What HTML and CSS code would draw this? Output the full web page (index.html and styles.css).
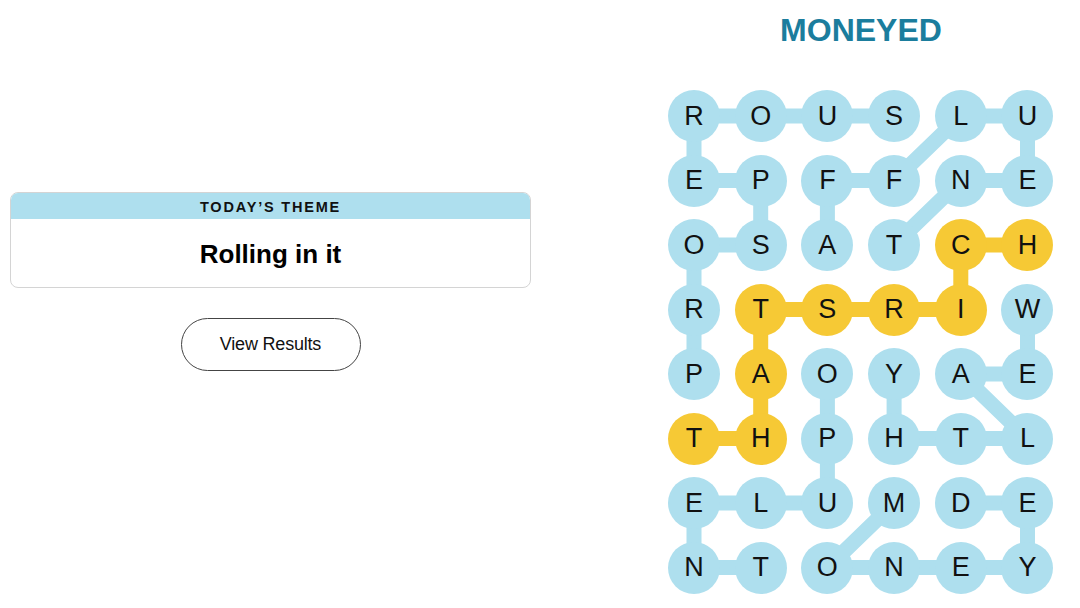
FILE: index.html
```html
<!DOCTYPE html>
<html lang="en">
<head>
  <meta charset="UTF-8">
  <meta name="viewport" content="width=device-width, initial-scale=1.0">
  <title>Strands - Results</title>
  <link rel="stylesheet" href="styles.css">
</head>
<body>

<div class="page">
  <!-- Theme card and results button -->
  <section class="theme-col">
    <div class="theme-card">
      <div class="theme-head">TODAY’S THEME</div>
      <div class="theme-body">Rolling in it</div>
    </div>
    <button class="results-btn">View Results</button>
  </section>

  <!-- Board with the found words -->
  <section class="board-col">
    <h2 class="found-word">MONEYED</h2>
    <div class="board">
      <svg class="links" width="386" height="504" viewBox="0 0 386 504">
        <g class="link">
          <!-- PROSPEROUS -->
          <polyline points="26,284 26,155 92.7,155 92.7,90.5 26,90.5 26,26 226.1,26"/>
          <!-- AFFLUENT -->
          <polyline points="159.4,155 159.4,90.5 226.1,90.5 292.8,26 359.5,26 359.5,90.5 292.8,90.5 226.1,155"/>
          <!-- WEALTHY -->
          <polyline points="359.5,219.5 359.5,284 292.8,284 359.5,348.5 292.8,348.5 226.1,348.5 226.1,284"/>
          <!-- OPULENT -->
          <polyline points="159.4,284 159.4,413 26,413 26,477.5 92.7,477.5"/>
          <!-- MONEYED -->
          <polyline points="226.1,413 159.4,477.5 359.5,477.5 359.5,413 292.8,413"/>
        </g>
        <!-- spangram -->
        <polyline class="link-span" points="26,348.5 92.7,348.5 92.7,219.5 292.8,219.5 292.8,155 359.5,155"/>
      </svg>

      <div class="cell">R</div><div class="cell">O</div><div class="cell">U</div><div class="cell">S</div><div class="cell">L</div><div class="cell">U</div>
      <div class="cell">E</div><div class="cell">P</div><div class="cell">F</div><div class="cell">F</div><div class="cell">N</div><div class="cell">E</div>
      <div class="cell">O</div><div class="cell">S</div><div class="cell">A</div><div class="cell">T</div><div class="cell span">C</div><div class="cell span">H</div>
      <div class="cell">R</div><div class="cell span">T</div><div class="cell span">S</div><div class="cell span">R</div><div class="cell span">I</div><div class="cell">W</div>
      <div class="cell">P</div><div class="cell span">A</div><div class="cell">O</div><div class="cell">Y</div><div class="cell">A</div><div class="cell">E</div>
      <div class="cell span">T</div><div class="cell span">H</div><div class="cell">P</div><div class="cell">H</div><div class="cell">T</div><div class="cell">L</div>
      <div class="cell">E</div><div class="cell">L</div><div class="cell">U</div><div class="cell">M</div><div class="cell">D</div><div class="cell">E</div>
      <div class="cell">N</div><div class="cell">T</div><div class="cell">O</div><div class="cell">N</div><div class="cell">E</div><div class="cell">Y</div>
    </div>
  </section>
</div>

</body>
</html>
```

FILE: styles.css
```css
/* Base */
body {
  margin: 0;
  font-family: "Liberation Sans", Arial, sans-serif;
  color: #000;
  background: #fff;
}
.page {
  display: flex;
  align-items: flex-start;
}

/* Theme column */
.theme-col {
  width: 521px;
  margin-left: 10px;
  padding-top: 192px;
  display: flex;
  flex-direction: column;
  align-items: center;
}
.theme-card {
  width: 100%;
  box-sizing: border-box;
  border: 1px solid #d4d4d4;
  border-radius: 8px;
  overflow: hidden;
}
.theme-head {
  height: 26px;
  line-height: 28px;
  background-color: #aedfee;
  text-align: center;
  font-size: 14.5px;
  font-weight: bold;
  letter-spacing: 1.8px;
  color: #111;
}
.theme-body {
  height: 68px;
  line-height: 70px;
  text-align: center;
  font-size: 26px;
  font-weight: bold;
}
.results-btn {
  margin-top: 30px;
  width: 180px;
  height: 53px;
  border: 1px solid #444;
  border-radius: 27px;
  background: #fff;
  font-family: "Liberation Sans", Arial, sans-serif;
  font-size: 18px;
  color: #111;
  letter-spacing: -0.2px;
}

/* Board column */
.board-col {
  width: 386px;
  margin-left: 137px;
}
.found-word {
  margin: 10px 0 40px;
  height: 40px;
  line-height: 41px;
  text-align: center;
  font-size: 32px;
  font-weight: bold;
  color: #1b7d9d;
}
.board {
  position: relative;
  display: grid;
  grid-template-columns: repeat(6, 52px);
  grid-template-rows: repeat(8, 52px);
  column-gap: 14.7px;
  row-gap: 12.5px;
}
.links {
  position: absolute;
  left: 0;
  top: 0;
}
.link polyline {
  fill: none;
  stroke: #aedfee;
  stroke-width: 15;
}
.link-span {
  fill: none;
  stroke: #f6c935;
  stroke-width: 15;
}
.cell {
  position: relative;
  width: 52px;
  height: 52px;
  border-radius: 50%;
  background-color: #aedfee;
  display: flex;
  align-items: center;
  justify-content: center;
  font-size: 27px;
  color: #111;
}
.cell.span {
  background-color: #f6c935;
}
```
